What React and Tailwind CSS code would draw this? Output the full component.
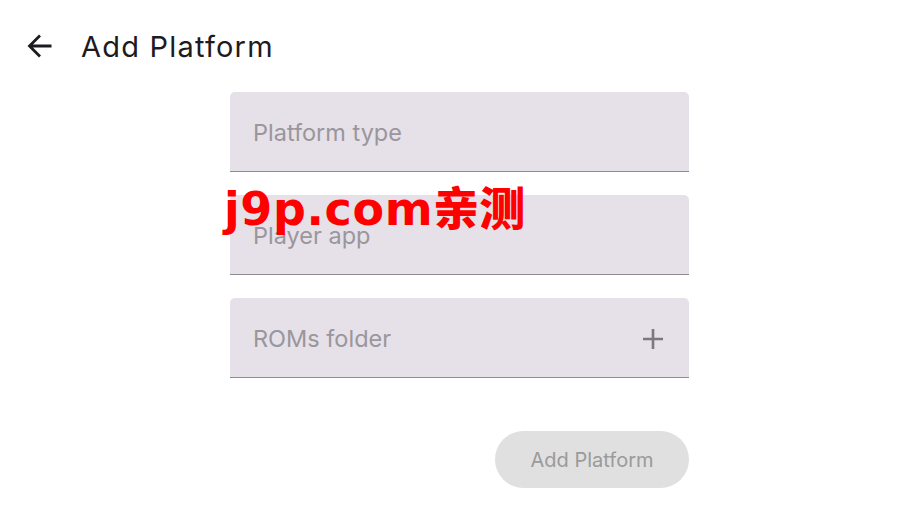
import React from "react";

function Field({ label, icon }) {
  return (
    <div className="h-[80px] w-full rounded-t-[5px] bg-[#e6e0e9] border-b-[1.5px] border-[#8f8b95] flex items-center pl-[23px] pr-[25px]">
      <span className="flex-1 text-[23.5px] text-[#99969c] pt-[3px]">{label}</span>
      {icon}
    </div>
  );
}

function Plus() {
  return (
    <svg width="22" height="22" viewBox="0 0 22 22" className="text-[#7c7880] mt-[2px]">
      <path d="M11 1v20M1 11h20" stroke="currentColor" strokeWidth="2.6" fill="none" />
    </svg>
  );
}

export default function App() {
  return (
    <div className="relative w-[919px] h-[517px] bg-white overflow-hidden" style={{ fontFamily: "Inter, 'Noto Sans', sans-serif" }}>
      <header className="flex items-center h-[92px] pl-[27px]">
        <svg width="26" height="26" viewBox="0 0 26 26" className="text-[#1d1b20]">
          <path d="M24.5 13H3M13 2.5 2.5 13 13 23.5" stroke="currentColor" strokeWidth="2.8" fill="none" />
        </svg>
        <h1 className="ml-[28px] text-[29px] text-[#1d1b20] leading-none tracking-[1.2px] pt-[1px]">Add Platform</h1>
      </header>

      <main className="ml-[230px] w-[459px] flex flex-col gap-[23px]">
        <Field label="Platform type" />
        <Field label="Player app" />
        <Field label="ROMs folder" icon={<Plus />} />
        <div className="flex justify-end mt-[30px]">
          <button className="w-[194px] h-[57px] rounded-full bg-[#e0e0e0] text-[20px] text-[#9a9a9a]">
            Add Platform
          </button>
        </div>
      </main>

      <div className="absolute left-[224px] top-[182px] flex items-baseline text-[#ff0000] leading-none">
        <span className="text-[46px] font-bold tracking-[0.6px]" style={{ fontFamily: "'DejaVu Sans', sans-serif" }}>
          j9p.com
        </span>
        <span className="text-[46px] font-black" style={{ fontFamily: "'Noto Sans CJK SC', sans-serif" }}>
          亲测
        </span>
      </div>
    </div>
  );
}
